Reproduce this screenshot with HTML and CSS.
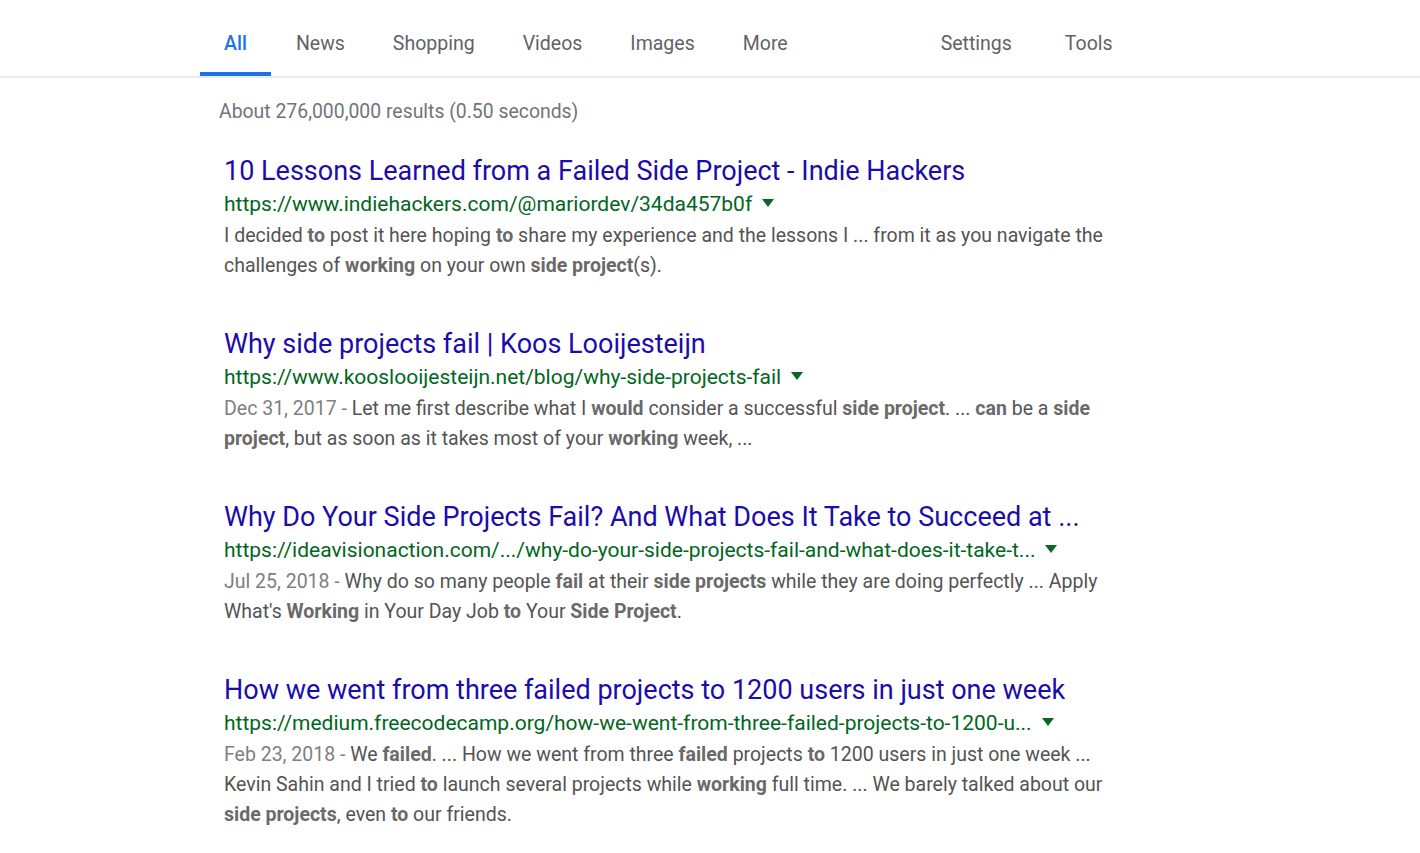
FILE: index.html
```html
<!DOCTYPE html>
<html>
<head>
<meta charset="utf-8">
<link rel="stylesheet" href="styles.css">
</head>
<body>
<div class="topbar">
  <nav class="tabs">
    <a class="tab active">All</a>
    <a class="tab">News</a>
    <a class="tab">Shopping</a>
    <a class="tab">Videos</a>
    <a class="tab">Images</a>
    <a class="tab">More</a>
    <a class="tab tab-right">Settings</a>
    <a class="tab tab-tools">Tools</a>
  </nav>
</div>
<main class="content">
  <div class="stats">About 276,000,000 results (0.50 seconds)</div>

  <div class="result">
    <a class="title">10 Lessons Learned from a Failed Side Project - Indie Hackers</a>
    <div class="url">https://www.indiehackers.com/@mariordev/34da457b0f<span class="caret"></span></div>
    <div class="snippet">I decided <b>to</b> post it here hoping <b>to</b> share my experience and the lessons I ... from it as you navigate the challenges of <b>working</b> on your own <b>side project</b>(s).</div>
  </div>

  <div class="result">
    <a class="title">Why side projects fail | Koos Looijesteijn</a>
    <div class="url">https://www.kooslooijesteijn.net/blog/why-side-projects-fail<span class="caret"></span></div>
    <div class="snippet"><span class="date">Dec 31, 2017 - </span>Let me first describe what I <b>would</b> consider a successful <b>side project</b>. ... <b>can</b> be a <b>side project</b>, but as soon as it takes most of your <b>working</b> week, ...</div>
  </div>

  <div class="result">
    <a class="title">Why Do Your Side Projects Fail? And What Does It Take to Succeed at ...</a>
    <div class="url">https://ideavisionaction.com/.../why-do-your-side-projects-fail-and-what-does-it-take-t...<span class="caret"></span></div>
    <div class="snippet"><span class="date">Jul 25, 2018 - </span>Why do so many people <b>fail</b> at their <b>side projects</b> while they are doing perfectly ... Apply What's <b>Working</b> in Your Day Job <b>to</b> Your <b>Side Project</b>.</div>
  </div>

  <div class="result">
    <a class="title">How we went from three failed projects to 1200 users in just one week</a>
    <div class="url">https://medium.freecodecamp.org/how-we-went-from-three-failed-projects-to-1200-u...<span class="caret"></span></div>
    <div class="snippet"><span class="date">Feb 23, 2018 - </span>We <b>failed</b>. ... How we went from three <b>failed</b> projects <b>to</b> 1200 users in just one week ... Kevin Sahin and I tried <b>to</b> launch several projects while <b>working</b> full time. ... We barely talked about our <b>side projects</b>, even <b>to</b> our friends.</div>
  </div>
</main>
</body>
</html>
```

FILE: styles.css
```css
* { box-sizing: border-box; }
body {
  margin: 0;
  background: #fff;
  font-family: Roboto, "Noto Sans", Arial, sans-serif;
}
.topbar {
  border-bottom: 2px solid #ebebeb;
}
.tabs {
  display: flex;
  padding-left: 200px;
  height: 76px;
}
.tab {
  display: flex;
  align-items: center;
  padding: 14px 24px 0;
  font-size: 19.5px;
  color: #5f6368;
  border-bottom: 4px solid transparent;
  cursor: pointer;
}
.tab.active {
  color: #1a73e8;
  font-weight: 500;
  border-bottom-color: #1a73e8;
  padding-right: 24px;
  margin-right: 1px;
}
.tab-right { margin-left: 105px; }
.tab-tools { margin-left: 5px; }
.content {
  padding-left: 224px;
  width: 1110px;
}
.stats {
  font-size: 19.4px;
  color: #70757a;
  margin-top: 20px;
  margin-left: -5px;
  line-height: 28px;
}
.result {
  margin-top: 27px;
}
.result + .result { margin-top: 45px; }
.title {
  display: block;
  font-size: 27px;
  line-height: 36px;
  color: #1a0dab;
  cursor: pointer;
}
.url {
  font-size: 21px;
  line-height: 30px;
  color: #006621;
  margin-top: 0;
}
.caret {
  display: inline-block;
  width: 0;
  height: 0;
  border-left: 6px solid transparent;
  border-right: 6px solid transparent;
  border-top: 8px solid #0b6623;
  margin-left: 10px;
  vertical-align: 4px;
}
.snippet {
  font-size: 19.5px;
  line-height: 30px;
  color: #545454;
  margin-top: 2px;
}
.snippet b { font-weight: 700; color: #6a6a6a; }
.date { color: #808080; }
```
